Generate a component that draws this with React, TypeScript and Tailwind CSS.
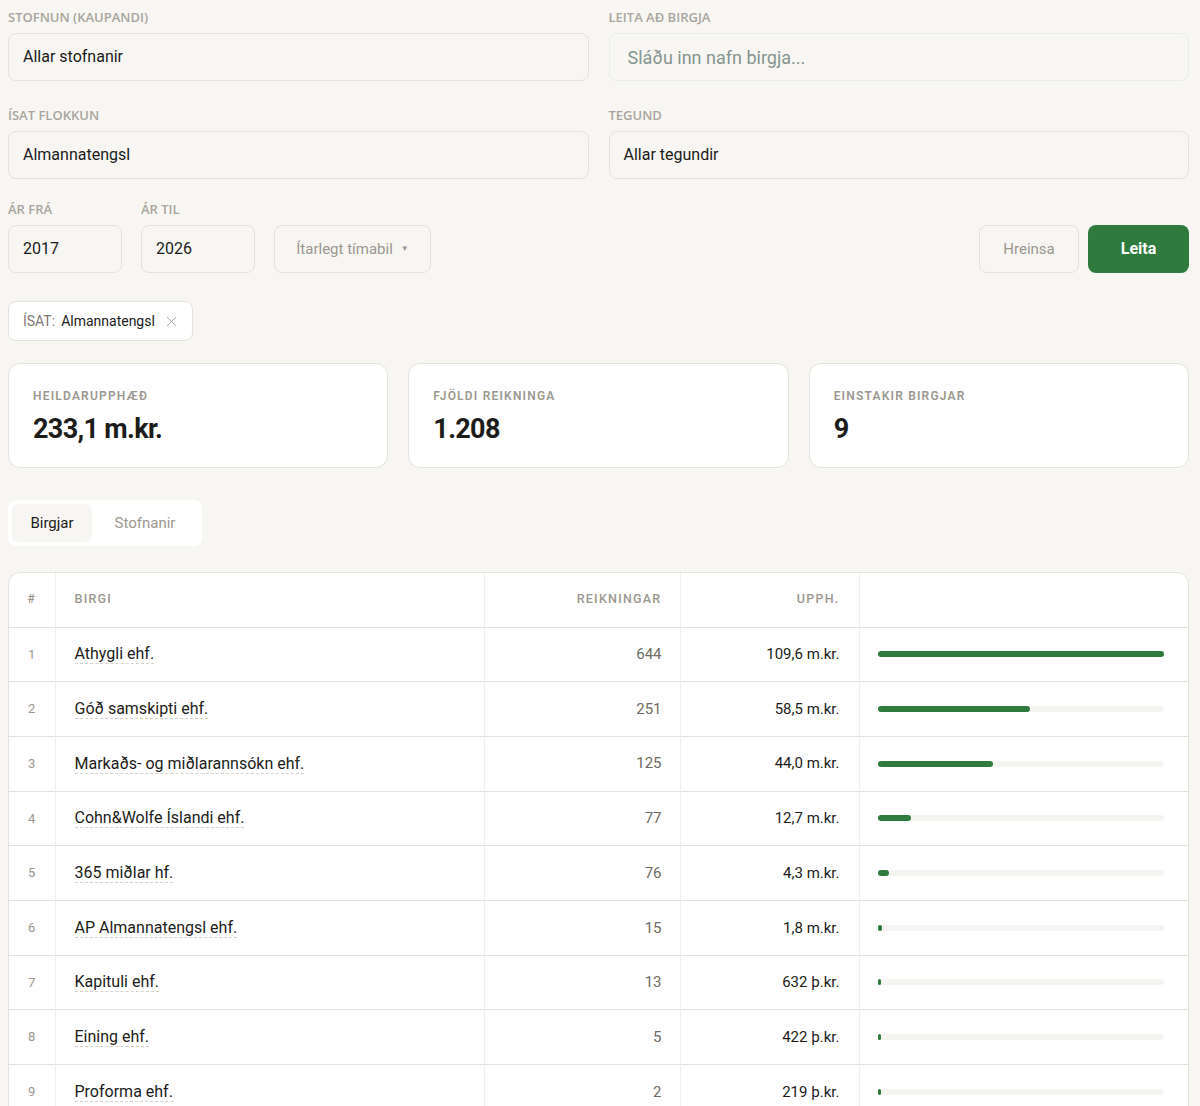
import { X } from "lucide-react";

const suppliers = [
  { name: "Athygli ehf.", count: 644, amount: "109,6 m.kr.", value: 109.6 },
  { name: "Góð samskipti ehf.", count: 251, amount: "58,5 m.kr.", value: 58.5 },
  { name: "Markaðs- og miðlarannsókn ehf.", count: 125, amount: "44,0 m.kr.", value: 44.0 },
  { name: "Cohn&Wolfe Íslandi ehf.", count: 77, amount: "12,7 m.kr.", value: 12.7 },
  { name: "365 miðlar hf.", count: 76, amount: "4,3 m.kr.", value: 4.3 },
  { name: "AP Almannatengsl ehf.", count: 15, amount: "1,8 m.kr.", value: 1.8 },
  { name: "Kapituli ehf.", count: 13, amount: "632 þ.kr.", value: 0.632 },
  { name: "Eining ehf.", count: 5, amount: "422 þ.kr.", value: 0.422 },
  { name: "Proforma ehf.", count: 2, amount: "219 þ.kr.", value: 0.219 },
];

const stats = [
  { label: "Heildarupphæð", value: "233,1 m.kr." },
  { label: "Fjöldi reikninga", value: "1.208" },
  { label: "Einstakir birgjar", value: "9" },
];

function FieldLabel({ children }: { children: React.ReactNode }) {
  return (
    <p className="mb-2 text-[13px] font-semibold uppercase leading-4 text-[#a8a59d] [font-family:'Open_Sans',sans-serif]">
      {children}
    </p>
  );
}

function SelectBox({ children }: { children: React.ReactNode }) {
  return (
    <div className="flex h-12 items-center rounded-lg border border-[#e4e2dc] bg-[#f7f6f2] px-[14px] text-base text-[#1c1c1a]">
      {children}
    </div>
  );
}

export default function App() {
  const max = suppliers[0].value;

  return (
    <div className="min-h-screen bg-[#f7f6f2] pl-2 pr-[11px] pt-[9px] text-[#1c1c1a] [font-family:Roboto,sans-serif]">
      {/* Filters */}
      <div className="grid grid-cols-2 gap-x-5 gap-y-[26px]">
        <div>
          <FieldLabel>Stofnun (kaupandi)</FieldLabel>
          <SelectBox>Allar stofnanir</SelectBox>
        </div>
        <div>
          <FieldLabel>Leita að birgja</FieldLabel>
          <div className="flex h-12 items-center rounded-lg border border-[#e9ece8] bg-[#f7f6f2] px-[18px] text-[18px] text-[#86958f]">
            Sláðu inn nafn birgja...
          </div>
        </div>
        <div>
          <FieldLabel>Ísat flokkun</FieldLabel>
          <SelectBox>Almannatengsl</SelectBox>
        </div>
        <div>
          <FieldLabel>Tegund</FieldLabel>
          <SelectBox>Allar tegundir</SelectBox>
        </div>
      </div>

      <div className="mt-[22px] flex items-end">
        <div className="w-[114px]">
          <FieldLabel>Ár frá</FieldLabel>
          <SelectBox>2017</SelectBox>
        </div>
        <div className="ml-[19px] w-[114px]">
          <FieldLabel>Ár til</FieldLabel>
          <SelectBox>2026</SelectBox>
        </div>
        <div className="ml-[19px] flex h-12 w-[157px] items-center justify-center gap-2 rounded-lg border border-[#e4e2dc] text-[15px] text-[#9b988f]">
          Ítarlegt tímabil
          <span className="text-[8px]">▼</span>
        </div>
        <div className="ml-auto flex gap-[9px]">
          <button className="h-12 w-[100px] rounded-lg border border-[#e4e2dc] text-[15px] text-[#9b988f]">
            Hreinsa
          </button>
          <button className="h-12 w-[101px] rounded-lg bg-[#2e7b3d] text-[16px] font-bold text-white">
            Leita
          </button>
        </div>
      </div>

      {/* Active filter */}
      <div className="mt-7 inline-flex h-10 items-center gap-[6px] rounded-lg border border-[#e4e2dc] bg-white pl-[14px] pr-3 text-[14px]">
        <span className="text-[#7d7a73]">ÍSAT:</span>
        <span>Almannatengsl</span>
        <X className="ml-[2px] h-[17px] w-[17px] text-[#a3a09a]" strokeWidth={1.25} />
      </div>

      {/* Stats */}
      <div className="mt-[22px] grid grid-cols-3 gap-5">
        {stats.map((s) => (
          <div key={s.label} className="h-[105px] rounded-xl border border-[#e4e2dc] bg-white px-6 pt-[23px]">
            <p className="text-[12px] font-semibold uppercase tracking-[0.1em] text-[#9b988f]">{s.label}</p>
            <p className="mt-[8px] text-[27px] font-bold leading-8 tracking-tight">{s.value}</p>
          </div>
        ))}
      </div>

      {/* Tabs */}
      <div className="mt-8 inline-flex rounded-lg bg-white p-1">
        <div className="flex h-[38px] w-[80px] items-center justify-center rounded-md bg-[#f7f6f2] text-[15px]">
          Birgjar
        </div>
        <div className="flex h-[38px] w-[106px] items-center justify-center text-[15px] text-[#9b988f]">
          Stofnanir
        </div>
      </div>

      {/* Table */}
      <div className="mt-[26px] overflow-hidden rounded-xl border border-[#e4e2dc] bg-white">
        <table className="w-full border-collapse">
          <thead>
            <tr className="h-[54px] text-[12.5px] uppercase tracking-[0.1em] text-[#9b988f]">
              <th className="w-[46px] border-r border-[#eef0ee] text-center font-medium">#</th>
              <th className="w-[429px] border-r border-[#eef0ee] pl-[19px] text-left font-medium">Birgi</th>
              <th className="w-[196px] border-r border-[#eef0ee] pr-[18px] text-right font-medium">Reikningar</th>
              <th className="w-[179px] border-r border-[#eef0ee] pr-[19px] text-right font-medium">Upph.</th>
              <th></th>
            </tr>
          </thead>
          <tbody>
            {suppliers.map((s, i) => (
              <tr key={s.name} className="h-[54.7px] border-t border-[#e4e2dc]">
                <td className="border-r border-[#eef0ee] text-center text-[13px] text-[#9b988f]">{i + 1}</td>
                <td className="border-r border-[#eef0ee] pl-[19px] text-[16px]">
                  <span className="border-b border-dashed border-[#d4d1ca]">{s.name}</span>
                </td>
                <td className="border-r border-[#eef0ee] pr-[18px] text-right text-[15px] text-[#6e6b65]">{s.count}</td>
                <td className="border-r border-[#eef0ee] pr-[19px] text-right text-[15px] text-[#1c1c1a]">{s.amount}</td>
                <td className="pl-[18px] pr-6">
                  <div className="h-[6px] w-full rounded-full bg-[#f6f4f1]">
                    <div
                      className="h-[6px] rounded-full bg-[#2e7b3d]"
                      style={{ width: `${Math.max((s.value / max) * 100, 1.2)}%` }}
                    />
                  </div>
                </td>
              </tr>
            ))}
          </tbody>
        </table>
      </div>
    </div>
  );
}
